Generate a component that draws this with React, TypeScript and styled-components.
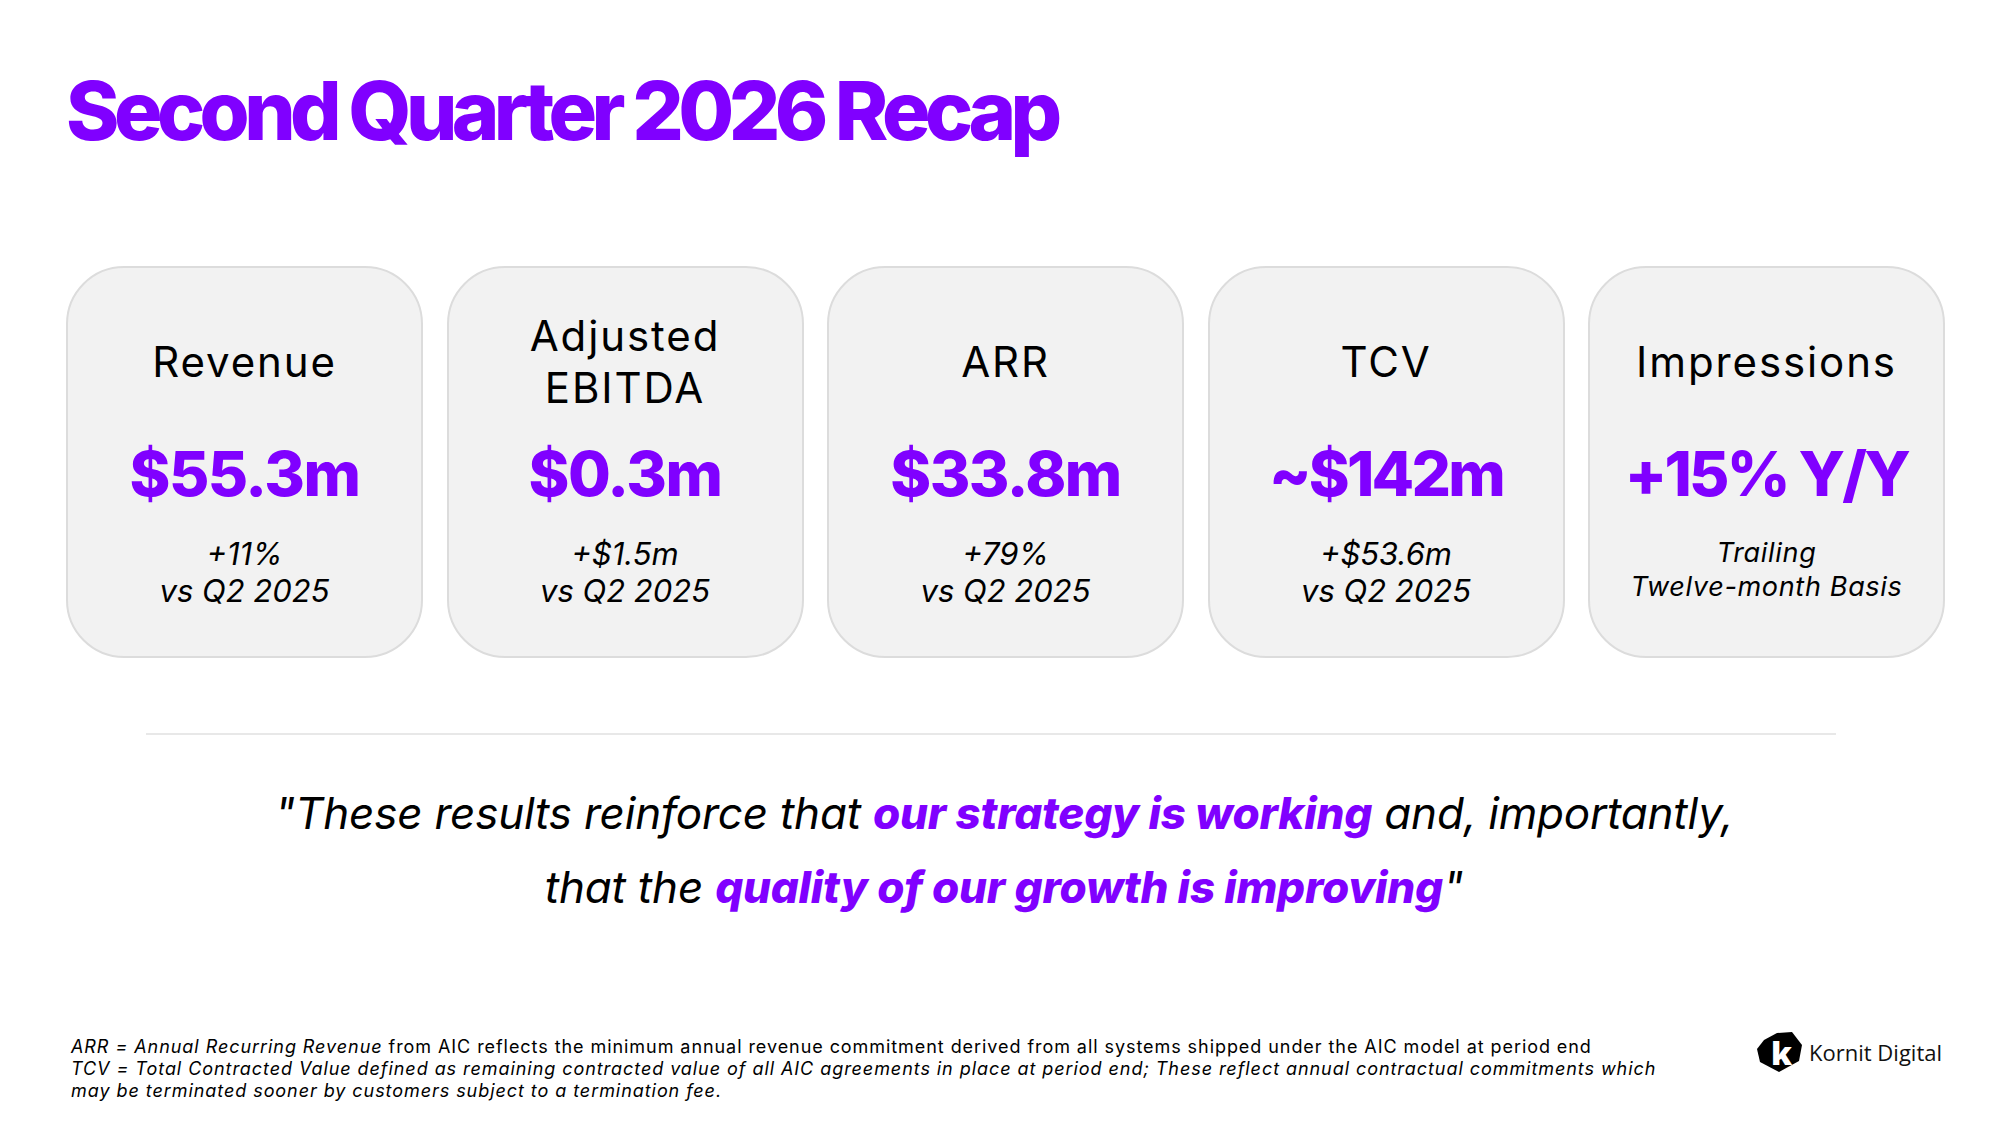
import React from "react";
import styled, { createGlobalStyle } from "styled-components";

const PURPLE = "#8000ff";

const Global = createGlobalStyle`
  html, body { margin: 0; padding: 0; background: #ffffff; }
  body { font-family: "Inter", "Liberation Sans", sans-serif; color: #000; }
  * { box-sizing: border-box; }
`;

const Page = styled.div`
  width: 2000px;
  height: 1125px;
  overflow: hidden;
  background: #fff;
  padding: 71px 58px 0 66px;
  display: flex;
  flex-direction: column;
`;

const Title = styled.h1`
  margin: 0;
  font-family: "Inter", "Liberation Sans", sans-serif;
  font-weight: 800;
  font-size: 81px;
  line-height: 1;
  letter-spacing: -0.069em;
  color: ${PURPLE};
  white-space: nowrap;
`;

const Cards = styled.div`
  margin-top: 114px;
  display: grid;
  grid-template-columns: repeat(5, 357px);
  column-gap: 23.5px;
`;

const Card = styled.div`
  height: 392px;
  background: #f2f2f2;
  border: 2px solid #dcdcdc;
  border-radius: 58px;
  padding-top: 42px;
  display: flex;
  flex-direction: column;
  align-items: center;
  text-align: center;
`;

const Label = styled.div`
  height: 104px;
  display: flex;
  align-items: center;
  justify-content: center;
  font-family: "Inter", "Liberation Sans", sans-serif;
  font-weight: 400;
  font-size: 42px;
  line-height: 52px;
  letter-spacing: 0.045em;
  color: #000;
`;

const Value = styled.div<{ $tight?: boolean }>`
  margin-top: 23px;
  font-family: "Inter", "Liberation Sans", sans-serif;
  font-weight: 800;
  font-size: 62px;
  line-height: 74px;
  letter-spacing: ${(p) => (p.$tight ? "-0.045em" : "-0.025em")};
  color: ${PURPLE};
  white-space: nowrap;
`;

const Sub = styled.div<{ $small?: boolean }>`
  margin-top: ${(p) => (p.$small ? "25px" : "24px")};
  font-family: "Inter", "Liberation Sans", sans-serif;
  font-style: italic;
  font-weight: 400;
  font-size: ${(p) => (p.$small ? "27px" : "31px")};
  line-height: ${(p) => (p.$small ? "34px" : "37px")};
  letter-spacing: ${(p) => (p.$small ? "0.025em" : "0")};
  color: #000;
`;

const Divider = styled.hr`
  margin: 75px 0 0 80px;
  width: 1690px;
  border: none;
  height: 2px;
  background: #e8e8e8;
`;

const Quote = styled.p`
  margin: 41px 0 0 0;
  width: 1876px;
  text-align: center;
  font-family: "Inter", "Liberation Sans", sans-serif;
  font-style: italic;
  font-weight: 400;
  font-size: 44px;
  line-height: 74px;
  letter-spacing: -0.005em;
  color: #000;
`;

const Emph = styled.span`
  font-weight: 800;
  color: ${PURPLE};
`;

const Bottom = styled.div`
  margin-top: auto;
  margin-bottom: 23px;
  display: flex;
  align-items: flex-start;
  justify-content: space-between;
`;

const Notes = styled.div`
  margin-left: 5px;
  font-family: "Inter", "Liberation Sans", sans-serif;
  font-size: 18px;
  line-height: 22px;
  letter-spacing: 0.052em;
  color: #000;
  white-space: nowrap;
`;

const NoteLine = styled.div``;

const It = styled.span`
  font-style: italic;
`;

const Logo = styled.div`
  margin-top: -5px;
  display: flex;
  align-items: center;
  gap: 7px;
`;

const LogoText = styled.span`
  font-family: "Open Sans", "Noto Sans", sans-serif;
  font-size: 22px;
  color: #111;
  white-space: nowrap;
`;

const cards = [
  { label: ["Revenue"], value: "$55.3m", sub: ["+11%", "vs Q2 2025"] },
  { label: ["Adjusted", "EBITDA"], value: "$0.3m", sub: ["+$1.5m", "vs Q2 2025"] },
  { label: ["ARR"], value: "$33.8m", sub: ["+79%", "vs Q2 2025"] },
  { label: ["TCV"], value: "~$142m", sub: ["+$53.6m", "vs Q2 2025"], tight: true },
  { label: ["Impressions"], value: "+15% Y/Y", sub: ["Trailing", "Twelve-month Basis"], small: true, tight: true },
];

export default function App() {
  return (
    <>
      <Global />
      <Page>
        <Title>Second Quarter 2026 Recap</Title>
        <Cards>
          {cards.map((c) => (
            <Card key={c.value}>
              <Label>
                <div>
                  {c.label.map((l, i) => (
                    <div key={i}>{l}</div>
                  ))}
                </div>
              </Label>
              <Value $tight={c.tight}>{c.value}</Value>
              <Sub $small={c.small}>
                {c.sub.map((s, i) => (
                  <div key={i}>{s}</div>
                ))}
              </Sub>
            </Card>
          ))}
        </Cards>
        <Divider />
        <Quote>
          "These results reinforce that <Emph>our strategy is working</Emph> and, importantly,
          <br />
          that the <Emph>quality of our growth is improving</Emph>"
        </Quote>
        <Bottom>
          <Notes>
            <NoteLine>
              <It>ARR = Annual Recurring Revenue</It> from AIC reflects the minimum annual revenue
              commitment derived from all systems shipped under the AIC model at period end
            </NoteLine>
            <NoteLine>
              <It>
                TCV = Total Contracted Value defined as remaining contracted value of all AIC
                agreements in place at period end; These reflect annual contractual commitments which
                <br />
                may be terminated sooner by customers subject to a termination fee.
              </It>
            </NoteLine>
          </Notes>
          <Logo>
            <svg width="45" height="42" viewBox="0 0 45 42">
              <polygon points="7,9 20,2 35,1 45,14 42,30 22,41 3,31 0,18" fill="#000" />
              <text
                x="14"
                y="34"
                fill="#fff"
                fontFamily="Open Sans, Noto Sans, sans-serif"
                fontWeight="800"
                fontSize="32"
              >
                k
              </text>
            </svg>
            <LogoText>Kornit Digital</LogoText>
          </Logo>
        </Bottom>
      </Page>
    </>
  );
}
